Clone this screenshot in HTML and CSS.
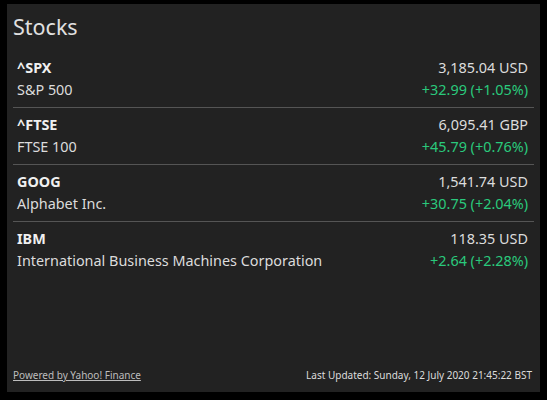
FILE: index.html
```html
<!DOCTYPE html>
<html>
<head>
<meta charset="utf-8">
<link rel="stylesheet" href="styles.css">
</head>
<body>
<div class="card">
  <h1 class="title">Stocks</h1>
  <div class="list">
    <div class="row">
      <div class="left"><div class="sym">^SPX</div><div class="name">S&amp;P 500</div></div>
      <div class="right"><div class="price">3,185.04 USD</div><div class="chg">+32.99 (+1.05%)</div></div>
    </div>
    <div class="row">
      <div class="left"><div class="sym">^FTSE</div><div class="name">FTSE 100</div></div>
      <div class="right"><div class="price">6,095.41 GBP</div><div class="chg">+45.79 (+0.76%)</div></div>
    </div>
    <div class="row">
      <div class="left"><div class="sym">GOOG</div><div class="name">Alphabet Inc.</div></div>
      <div class="right"><div class="price">1,541.74 USD</div><div class="chg">+30.75 (+2.04%)</div></div>
    </div>
    <div class="row last">
      <div class="left"><div class="sym">IBM</div><div class="name">International Business Machines Corporation</div></div>
      <div class="right"><div class="price">118.35 USD</div><div class="chg">+2.64 (+2.28%)</div></div>
    </div>
  </div>
  <div class="footer">
    <a class="powered" href="#">Powered by Yahoo! Finance</a>
    <span class="updated">Last Updated: Sunday, 12 July 2020 21:45:22 BST</span>
  </div>
</div>
</body>
</html>
```
FILE: styles.css
```css
html, body {
  margin: 0;
  padding: 0;
  background: #000;
  height: 100%;
}
body {
  padding: 4px 7px 8px 7px;
  box-sizing: border-box;
  font-family: "Noto Sans", "Open Sans", sans-serif;
  color: #dcdcdc;
}
.card {
  background: #222222;
  height: 388px;
  width: 533px;
  box-sizing: border-box;
  padding: 8px 6px 8px 6px;
  display: flex;
  flex-direction: column;
}
.title {
  margin: 0;
  font-weight: normal;
  font-size: 21.5px;
  line-height: 30px;
  color: #e0e0e0;
  padding-bottom: 9px;
}
.list {
  flex: 1;
}
.row {
  display: flex;
  justify-content: space-between;
  padding: 6px 6px 6px 4px;
  border-bottom: 1px solid #555;
}
.row.last {
  border-bottom: none;
}
.sym {
  font-weight: bold;
  font-size: 14.4px;
  line-height: 22px;
  color: #f0f0f0;
}
.name, .price, .chg {
  font-size: 14.4px;
  line-height: 22px;
}
.right {
  text-align: right;
}
.chg {
  color: #2ac97c;
}
.footer {
  display: flex;
  justify-content: space-between;
  align-items: baseline;
  font-size: 10px;
  line-height: 14px;
  padding: 0 2px 2px 0;
}
.powered {
  color: #bdbdbd;
  text-decoration: underline;
}
.updated {
  color: #dcdcdc;
}
```
